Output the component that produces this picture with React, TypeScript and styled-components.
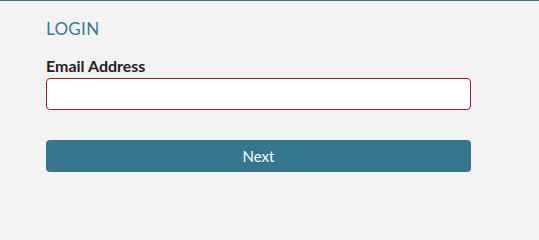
import React, { useState } from 'react';
import styled, { createGlobalStyle } from 'styled-components';

const GlobalStyle = createGlobalStyle`
  html, body {
    margin: 0;
    padding: 0;
    background: #f3f3f3;
  }
  body {
    font-family: Lato, "Open Sans", sans-serif;
    color: #222;
  }
`;

const Page = styled.main`
  min-height: 202px;
  box-sizing: border-box;
  border-top: 1px solid #3b6f85;
  background: #f3f3f3;
`;

const Form = styled.form`
  width: 425px;
  padding: 17px 0 0 46px;
  display: flex;
  flex-direction: column;
`;

const Heading = styled.h2`
  margin: 0;
  font-size: 17px;
  font-weight: 400;
  line-height: 22px;
  color: #3a7a94;
  letter-spacing: 0.3px;
`;

const Label = styled.label`
  margin-top: 16px;
  font-size: 16px;
  font-weight: 700;
  line-height: 20px;
  color: #222;
`;

const Input = styled.input<{ invalid?: boolean }>`
  box-sizing: border-box;
  height: 32px;
  width: 100%;
  margin-top: 2px;
  padding: 0 10px;
  border: 1px solid ${({ invalid }) => (invalid ? '#a01d27' : '#bdbdbd')};
  border-radius: 4px;
  background: #fff;
  font-family: inherit;
  font-size: 15px;
  outline: none;
`;

const Button = styled.button`
  box-sizing: border-box;
  height: 32px;
  width: 100%;
  margin-top: 30px;
  border: 0;
  border-radius: 4px;
  background: #34778e;
  color: #fff;
  font-family: inherit;
  font-size: 15px;
  cursor: pointer;
`;

const App = () => {
  const [email, setEmail] = useState('');

  return (
    <>
      <GlobalStyle />
      <Page>
        <Form onSubmit={(e) => e.preventDefault()}>
          <Heading>LOGIN</Heading>
          <Label htmlFor="email">Email Address</Label>
          <Input
            id="email"
            type="email"
            invalid
            value={email}
            onChange={(e) => setEmail(e.target.value)}
          />
          <Button type="submit">Next</Button>
        </Form>
      </Page>
    </>
  );
};

export default App;
